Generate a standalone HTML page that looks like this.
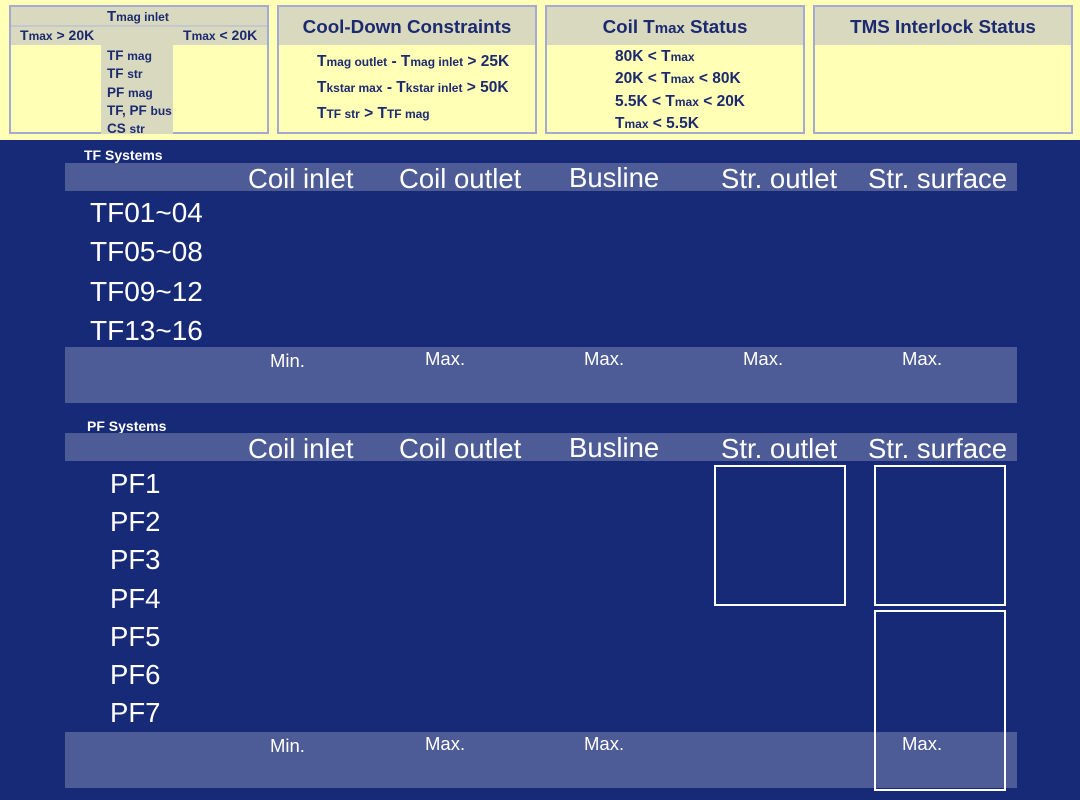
<!DOCTYPE html>
<html><head><meta charset="utf-8"><style>
*{margin:0;padding:0;box-sizing:border-box}
body{width:1080px;height:800px;background:#172a78;position:relative;overflow:hidden;font-family:"Liberation Sans",sans-serif}
.a{position:absolute;white-space:nowrap}
.top{position:absolute;left:0;top:0;width:1080px;height:140px;background:#ffffb5}
.box{position:absolute;top:5px;height:129px;border:2px solid #a4aad2;background:#ffffb5}
.hd{position:absolute;left:0;top:0;right:0;height:38px;background:#d8d9bf;color:#1c2a70;font-weight:bold;font-size:18.8px;text-align:center;line-height:40px}
.t{color:#1c2a70;font-weight:bold;font-size:15.5px}
.t small{font-size:12px}
.t div{white-space:nowrap}
.band{position:absolute;left:65px;width:952px;background:#4d5b96}
.w{color:#fff;font-size:27.5px}
.m{color:#fff;font-size:18.5px}
.wb{position:absolute;border:2px solid #fff}
</style></head><body>
<div class="top">
 <div class="box" style="left:9px;width:260px">
  <div style="position:absolute;left:0;top:0;right:0;height:38px;background:#d8d9bf"></div>
  <div style="position:absolute;left:0;top:18px;right:0;height:2px;background:#c4c8cc"></div>
  <div style="position:absolute;left:90px;top:38px;width:72px;height:89px;background:#d8d9bf"></div>
  <div class="a t" style="left:96px;top:1px;font-size:15px">T<small>mag inlet</small></div>
  <div class="a t" style="left:9px;top:20px;font-size:14px"><div>T<small>max</small> &gt; 20K</div></div>
  <div class="a t" style="left:172px;top:20px;font-size:14px"><div>T<small>max</small> &lt; 20K</div></div>
  <div class="a t" style="left:96px;top:40px;font-size:13.5px;line-height:17.3px"><div>TF <small>mag</small></div><div>TF <small>str</small></div><div>PF <small>mag</small></div><div>TF, PF <small>bus</small></div><div>CS <small>str</small></div></div>
 </div>
 <div class="box" style="left:277px;width:260px">
  <div class="hd">Cool-Down Constraints</div>
  <div class="a t" style="left:38px;top:42px;line-height:26px"><div>T<small>mag outlet</small> - T<small>mag inlet</small> &gt; 25K</div><div>T<small>kstar max</small> - T<small>kstar inlet</small> &gt; 50K</div><div>T<small>TF str</small> &gt; T<small>TF mag</small></div></div>
 </div>
 <div class="box" style="left:545px;width:260px">
  <div class="hd">Coil T<span style="font-size:15px">max</span> Status</div>
  <div class="a t" style="left:68px;top:39px;line-height:21.3px"><div>80K &lt; T<small>max</small></div><div>20K &lt; T<small>max</small> &lt; 80K</div><div>5.5K &lt; T<small>max</small> &lt; 20K</div><div>T<small>max</small> &lt; 5.5K</div></div>
 </div>
 <div class="box" style="left:813px;width:260px">
  <div class="hd">TMS Interlock Status</div>
 </div>
</div>

<div class="a" style="left:84px;top:147px;color:#fff;font-weight:bold;font-size:14px">TF Systems</div>
<div class="band" style="top:163px;height:28px"></div>
<div class="a w" style="left:248px;top:163px">Coil inlet</div>
<div class="a w" style="left:399px;top:163px">Coil outlet</div>
<div class="a w" style="left:569px;top:162px">Busline</div>
<div class="a w" style="left:721px;top:163px">Str. outlet</div>
<div class="a w" style="left:868px;top:163px">Str. surface</div>
<div class="a w" style="left:90px;top:193px;font-size:28px;line-height:39.3px">TF01~04<br>TF05~08<br>TF09~12<br>TF13~16</div>
<div class="band" style="top:347px;height:56px"></div>
<div class="a m" style="left:270px;top:350px">Min.</div>
<div class="a m" style="left:425px;top:348px">Max.</div>
<div class="a m" style="left:584px;top:348px">Max.</div>
<div class="a m" style="left:743px;top:348px">Max.</div>
<div class="a m" style="left:902px;top:348px">Max.</div>

<div class="a" style="left:87px;top:418px;color:#fff;font-weight:bold;font-size:14px">PF Systems</div>
<div class="band" style="top:433px;height:28px"></div>
<div class="a w" style="left:248px;top:433px">Coil inlet</div>
<div class="a w" style="left:399px;top:433px">Coil outlet</div>
<div class="a w" style="left:569px;top:432px">Busline</div>
<div class="a w" style="left:721px;top:433px">Str. outlet</div>
<div class="a w" style="left:868px;top:433px">Str. surface</div>
<div class="a w" style="left:110px;top:465px;line-height:38.2px">PF1<br>PF2<br>PF3<br>PF4<br>PF5<br>PF6<br>PF7</div>
<div class="band" style="top:732px;height:56px"></div>
<div class="a m" style="left:270px;top:735px">Min.</div>
<div class="a m" style="left:425px;top:733px">Max.</div>
<div class="a m" style="left:584px;top:733px">Max.</div>
<div class="a m" style="left:902px;top:733px">Max.</div>
<div class="wb" style="left:714px;top:465px;width:132px;height:141px"></div>
<div class="wb" style="left:874px;top:465px;width:132px;height:141px"></div>
<div class="wb" style="left:874px;top:610px;width:132px;height:181px"></div>
</body></html>
